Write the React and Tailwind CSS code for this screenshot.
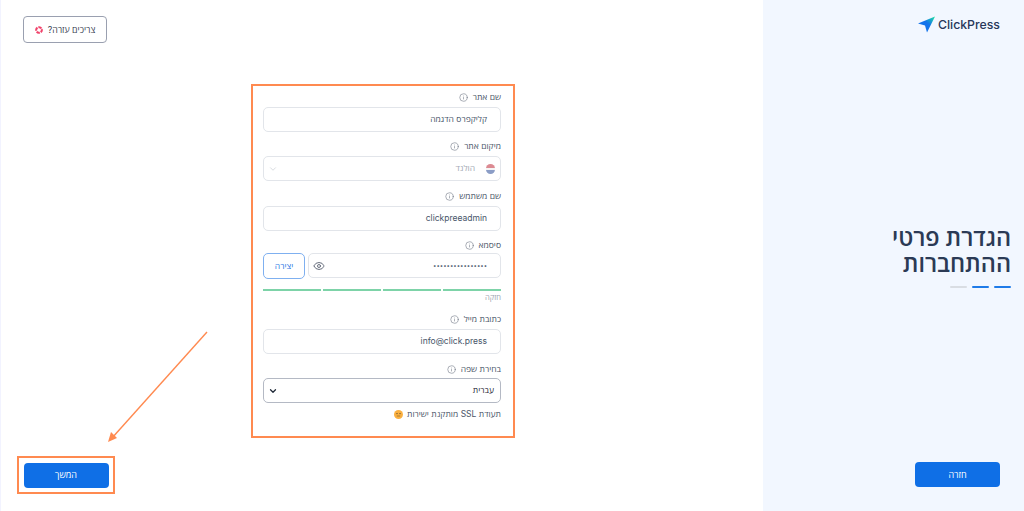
import { ChevronDown, Eye, Info } from "lucide-react";

const font = "font-['Inter','Open_Sans','Liberation_Sans',sans-serif]";

function Label({ children }) {
  return (
    <div className="flex h-[12px] items-center gap-[5px] text-[8.5px] leading-none text-[#4a5568]">
      <span>{children}</span>
      <Info size={9} strokeWidth={1.5} className="text-[#6b7280]" />
    </div>
  );
}

function Box({ children, className = "text-[#475569] pr-[13px]" }) {
  return (
    <div className={`flex h-[25px] items-center rounded-[5px] border bg-white text-[8.5px] ${className}`}>
      {children}
    </div>
  );
}

function Flag() {
  return (
    <div className="flex h-[10px] w-[9px] flex-col overflow-hidden rounded-full">
      <div className="h-[4px] bg-[#dc8a92]" />
      <div className="h-[2px] bg-[#f5f5f5]" />
      <div className="h-[4px] bg-[#8b9dc6]" />
    </div>
  );
}

function Logo() {
  return (
    <svg width="18" height="17" viewBox="0 0 18 17">
      <defs>
        <linearGradient id="lg" x1="0.3" y1="0.7" x2="0.95" y2="0">
          <stop offset="0.4" stopColor="#1273eb" />
          <stop offset="1" stopColor="#1fe0a0" />
        </linearGradient>
      </defs>
      <path d="M0 7.5 17 0.5 9 16.5 7 9.5Z" fill="url(#lg)" />
    </svg>
  );
}

function Buoy() {
  return (
    <svg width="8" height="8" viewBox="0 0 8 8">
      <circle cx="4" cy="4" r="2.8" fill="none" stroke="#f0436b" strokeWidth="2" strokeDasharray="3.4 1" transform="rotate(-20 4 4)" />
    </svg>
  );
}

function Smile() {
  return (
    <svg width="9" height="9" viewBox="0 0 9 9">
      <circle cx="4.5" cy="4.5" r="4.5" fill="#fbb040" />
      <circle cx="3" cy="3.6" r="0.7" fill="#5b4a2a" />
      <circle cx="6" cy="3.6" r="0.7" fill="#5b4a2a" />
      <path d="M2.8 6h3.4" stroke="#8a6a30" strokeWidth="0.7" />
    </svg>
  );
}

export default function App() {
  return (
    <div className={`relative flex h-[511px] w-[1024px] overflow-hidden bg-white ${font}`}>
      <main className="flex w-[763px] flex-col border-l border-[#f2f3ff]">
        <div className="pl-[22px] pt-[16px]">
          <button className="flex h-[27px] w-[84px] items-center justify-center gap-[5px] rounded-[4px] border border-[#9aa0b0] text-[8.8px] text-[#374151]">
            <Buoy />
            <span dir="rtl">צריכים עזרה?</span>
          </button>
        </div>

        <form dir="rtl" className="ml-[250px] mt-[41px] flex h-[354px] w-[264px] flex-col border-2 border-[#ff8a50] pl-[10px] pr-[12px] pt-[5px]">
          <Label>שם אתר</Label>
          <div className="mt-[4px]">
            <Box className="border-[#e2e5ea] pr-[13px] text-[#475569]">קליקפרס הדגמה</Box>
          </div>

          <div className="mt-[8px]"><Label>מיקום אתר</Label></div>
          <div className="mt-[4px]">
            <Box className="justify-between border-[#e2e5ea] pl-[4px] pr-[5px] text-[#a3a9b3]">
              <div className="flex items-center gap-[11px]">
                <Flag />
                <span>הולנד</span>
              </div>
              <ChevronDown size={10} className="text-[#d1d5db]" />
            </Box>
          </div>

          <div className="mt-[9px]"><Label>שם משתמש</Label></div>
          <div className="mt-[4px]">
            <Box className="border-[#e2e5ea] pr-[13px] text-[#475569]"><span dir="ltr">clickpreeadmin</span></Box>
          </div>

          <div className="mt-[8px]"><Label>סיסמא</Label></div>
          <div className="mt-[2px] flex gap-[3px]">
            <div className="flex-1">
              <Box className="justify-between border-[#e2e5ea] pl-[4px] pr-[13px] text-[#475569]">
                <span className="text-[6px] leading-none">••••••••••••••••</span>
                <Eye size={12} className="text-[#6b7280]" />
              </Box>
            </div>
            <button type="button" className="h-[26px] w-[42px] rounded-[5px] border border-[#7fb0f0] text-[8.5px] text-[#2f7be5]">יצירה</button>
          </div>
          <div className="mt-[10px] flex gap-[2px]">
            <div className="h-[2px] flex-1 bg-[#7dd3a8]" />
            <div className="h-[2px] flex-1 bg-[#7dd3a8]" />
            <div className="h-[2px] flex-1 bg-[#7dd3a8]" />
            <div className="h-[2px] flex-1 bg-[#7dd3a8]" />
          </div>
          <div className="mt-[2px] text-[7.5px] leading-[10px] text-[#9ca3af]">חזקה</div>

          <div className="mt-[10px]"><Label>כתובת מייל</Label></div>
          <div className="mt-[4px]">
            <Box className="border-[#e2e5ea] pr-[13px] text-[#475569]"><span dir="ltr">info@click.press</span></Box>
          </div>

          <div className="mt-[9px]"><Label>בחירת שפה</Label></div>
          <div className="mt-[3px]">
            <Box className="justify-between border-[#b4b9c4] pl-[4px] pr-[6px] text-[#1f2937]">
              <span>עברית</span>
              <ChevronDown size={10} strokeWidth={3} className="text-[#1f2937]" />
            </Box>
          </div>
          <div className="mt-[5px] flex items-center gap-[4px] text-[8.5px] text-[#4a5568]">
            <span>תעודת SSL מותקנת ישירות</span>
            <Smile />
          </div>
        </form>

        <div className="ml-[16px] mt-[18px] flex h-[38px] w-[98px] items-center justify-center border-2 border-[#ff8a50]">
          <button className="h-[25px] w-[85px] rounded-[4px] bg-[#0f6fe6] text-[9px] text-white">המשך</button>
        </div>
      </main>

      <aside dir="rtl" className="flex w-[261px] flex-col bg-[#f2f7ff] pr-[13px]">
        <div dir="ltr" className="mt-[16px] flex items-center justify-end gap-[2px] pr-[11px]">
          <Logo />
          <span className="mt-[1px] text-[12.3px] font-medium leading-none text-[#27375a]">ClickPress</span>
        </div>
        <h1 className="mt-[192px] text-[23.5px] font-semibold leading-[26px] text-[#2b3a55]">
          הגדרת פרטי
          <br />
          ההתחברות
        </h1>
        <div className="mt-[9px] flex gap-[5px]">
          <div className="h-[2px] w-[17px] rounded bg-[#1f7be8]" />
          <div className="h-[2px] w-[17px] rounded bg-[#1f7be8]" />
          <div className="h-[2px] w-[17px] rounded bg-[#d9dde3]" />
        </div>
        <button className="mr-[11px] mt-[174px] h-[25px] w-[85px] rounded-[4px] bg-[#0f6fe6] text-[9px] text-white">חזרה</button>
      </aside>

      <svg className="pointer-events-none absolute left-[105px] top-[330px]" width="104" height="114" viewBox="0 0 104 114">
        <path d="M102 2 7 108" stroke="#ff8a50" strokeWidth="1.4" fill="none" />
        <path d="M3 112 6 102 12 108Z" fill="#ff8a50" />
      </svg>
    </div>
  );
}
